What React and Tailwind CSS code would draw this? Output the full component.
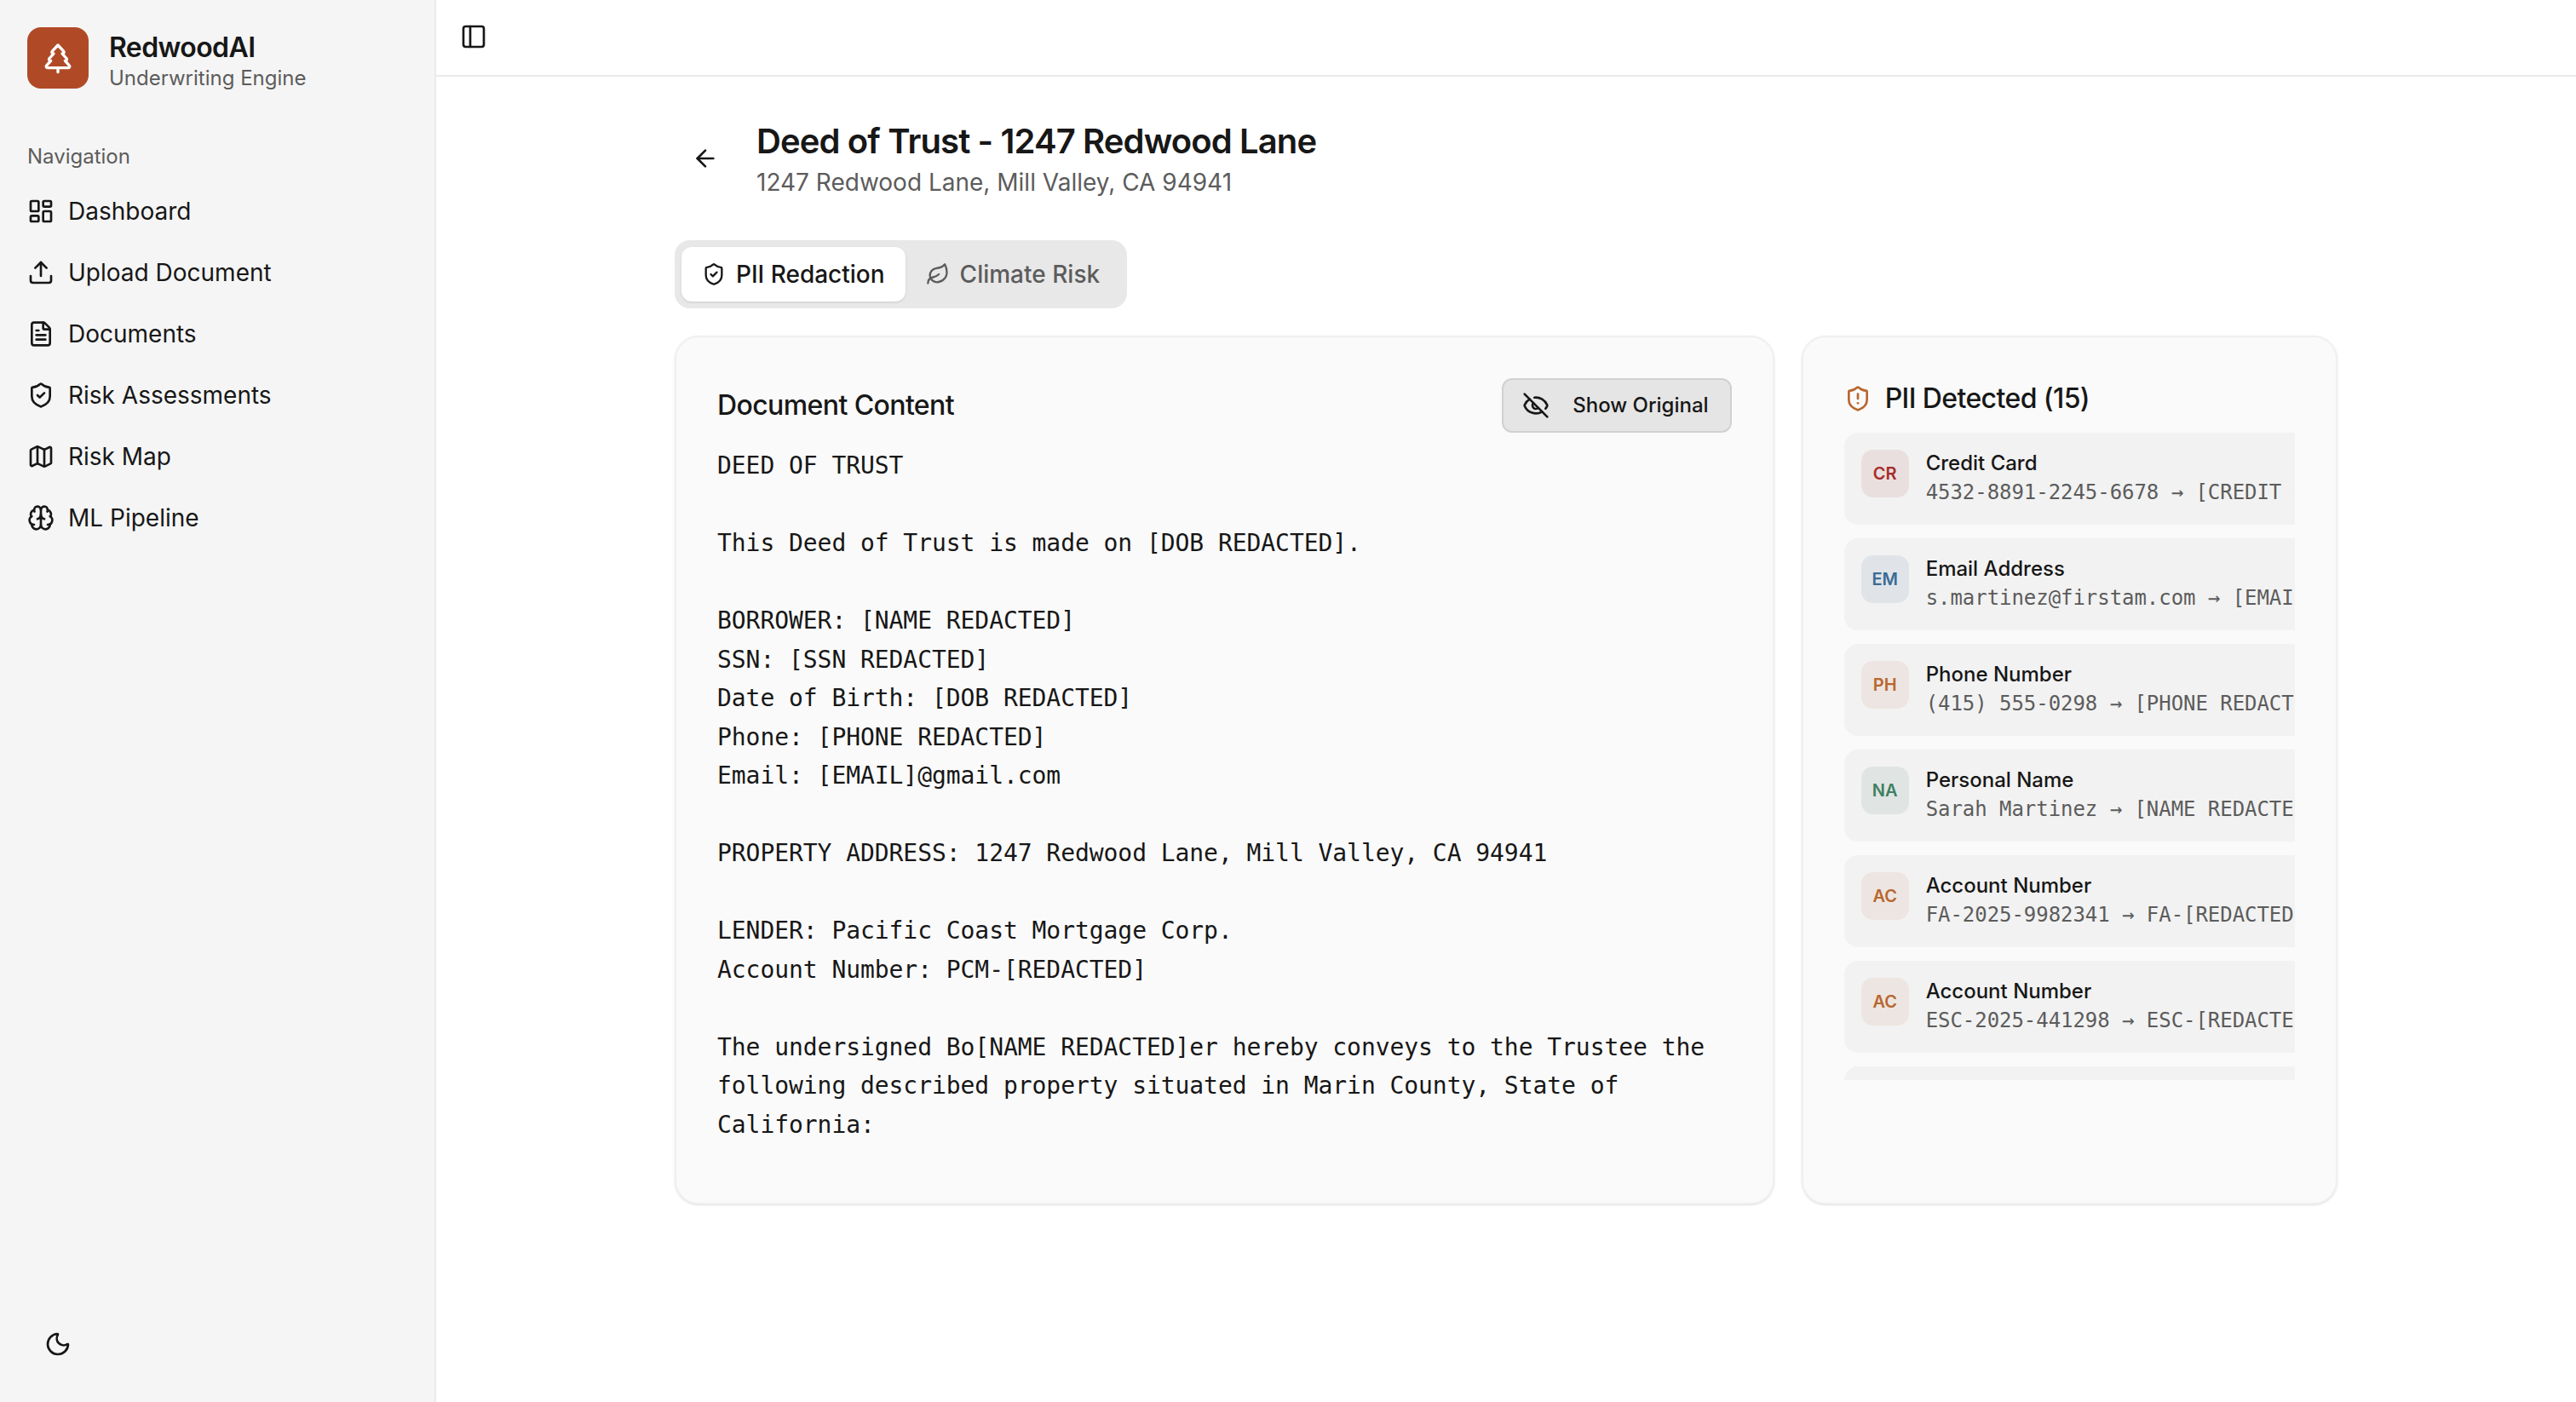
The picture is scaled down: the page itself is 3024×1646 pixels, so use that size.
import {
  ArrowLeft,
  Brain,
  EyeOff,
  FileText,
  LayoutDashboard,
  Leaf,
  Map as MapIcon,
  Moon,
  PanelLeft,
  ShieldAlert,
  ShieldCheck,
  TreePine,
  Upload,
} from 'lucide-react'

const navItems = [
  { label: 'Dashboard', icon: LayoutDashboard },
  { label: 'Upload Document', icon: Upload },
  { label: 'Documents', icon: FileText },
  { label: 'Risk Assessments', icon: ShieldCheck },
  { label: 'Risk Map', icon: MapIcon },
  { label: 'ML Pipeline', icon: Brain },
]

const documentText = `DEED OF TRUST

This Deed of Trust is made on [DOB REDACTED].

BORROWER: [NAME REDACTED]
SSN: [SSN REDACTED]
Date of Birth: [DOB REDACTED]
Phone: [PHONE REDACTED]
Email: [EMAIL]@gmail.com

PROPERTY ADDRESS: 1247 Redwood Lane, Mill Valley, CA 94941

LENDER: Pacific Coast Mortgage Corp.
Account Number: PCM-[REDACTED]

The undersigned Bo[NAME REDACTED]er hereby conveys to the Trustee the following described property situated in Marin County, State of California:`

const piiItems = [
  {
    code: 'CR',
    label: 'Credit Card',
    value: '4532-8891-2245-6678 → [CREDIT CARD REDACTED]',
    badge: 'bg-[#eadfdf] text-[#a52d2a]',
  },
  {
    code: 'EM',
    label: 'Email Address',
    value: 's.martinez@firstam.com → [EMAIL REDACTED]',
    badge: 'bg-[#e0e4e8] text-[#3b6c94]',
  },
  {
    code: 'PH',
    label: 'Phone Number',
    value: '(415) 555-0298 → [PHONE REDACTED]',
    badge: 'bg-[#ede5e1] text-[#b8672f]',
  },
  {
    code: 'NA',
    label: 'Personal Name',
    value: 'Sarah Martinez → [NAME REDACTED]',
    badge: 'bg-[#e0e5e3] text-[#3f8062]',
  },
  {
    code: 'AC',
    label: 'Account Number',
    value: 'FA-2025-9982341 → FA-[REDACTED]',
    badge: 'bg-[#ede5e1] text-[#b8672f]',
  },
  {
    code: 'AC',
    label: 'Account Number',
    value: 'ESC-2025-441298 → ESC-[REDACTED]',
    badge: 'bg-[#ede5e1] text-[#b8672f]',
  },
  {
    code: 'AC',
    label: 'Account Number',
    value: 'PCM-2025-118834 → PCM-[REDACTED]',
    badge: 'bg-[#ede5e1] text-[#b8672f]',
  },
]

const Sidebar = () => {
  return (
    <aside className="flex w-[512px] shrink-0 flex-col border-r-2 border-[#ebebeb] bg-[#f5f5f5]">
      <div className="flex h-[136px] items-start gap-6 p-8">
        <div className="flex size-[72px] items-center justify-center rounded-[16px] bg-[#b04a26]">
          <TreePine className="size-10 text-white" />
        </div>
        <div className="pt-1">
          <div className="text-[32px] leading-[40px] font-semibold tracking-[-0.6px] text-[#171717]">RedwoodAI</div>
          <div className="text-[24px] leading-[32px] text-[#5c5c5c]">Underwriting Engine</div>
        </div>
      </div>
      <div className="flex-1 px-4 pt-4">
        <div className="flex h-16 items-center px-4 text-[24px] text-[#5c5c5c]">Navigation</div>
        <nav className="flex flex-col gap-2">
          {navItems.map((item) => (
            <div key={item.label} className="flex h-16 items-center gap-4 px-4 text-[28px] text-[#171717]">
              <item.icon className="size-8" />
              <span>{item.label}</span>
            </div>
          ))}
        </nav>
      </div>
      <div className="px-9 pb-9">
        <div className="flex size-16 items-center justify-center text-[#171717]">
          <Moon className="size-8" />
        </div>
      </div>
    </aside>
  )
}

const DocumentCard = () => {
  return (
    <section className="col-span-2 rounded-[28px] border-2 border-[#f0f0f0] bg-[#fafafa] p-12 shadow-sm">
      <div className="mb-4 flex h-16 items-center justify-between">
        <h2 className="text-[32px] font-medium tracking-[-0.6px] text-[#171717]">Document Content</h2>
        <button className="flex h-16 items-center gap-[27px] rounded-[12px] border-2 border-[#d1d1d1] bg-[#e5e5e5] pr-[25px] pl-[22px] text-[24px] font-medium text-[#171717]">
          <EyeOff className="size-8" />
          Show Original
        </button>
      </div>
      <div className="h-[840px] font-['DejaVu_Sans_Mono',monospace] text-[28px] leading-[45.5px] tracking-[-0.06px] whitespace-pre-wrap text-[#171717]">
        {documentText}
      </div>
    </section>
  )
}

const PiiCard = () => {
  return (
    <section className="rounded-[28px] border-2 border-[#f0f0f0] bg-[#fafafa] p-12 shadow-sm">
      <div className="mb-4 flex h-12 items-center gap-4">
        <ShieldAlert className="size-8 text-[#b8672f]" />
        <h2 className="text-[32px] font-medium tracking-[-0.6px] text-[#171717]">PII Detected (15)</h2>
      </div>
      <div className="h-[760px] overflow-hidden">
        <div className="flex w-max flex-col gap-4">
          {piiItems.map((item, i) => (
            <div key={i} className="flex h-[108px] w-[700px] gap-5 rounded-[16px] bg-[#f2f2f2] p-5">
              <div
                className={`flex size-14 shrink-0 items-center justify-center rounded-[14px] text-[20px] font-semibold ${item.badge}`}
              >
                {item.code}
              </div>
              <div>
                <div className="text-[24px] leading-[32px] font-medium text-[#171717]">{item.label}</div>
                <div className="font-['DejaVu_Sans_Mono',monospace] text-[24px] leading-[36px] tracking-[-0.05px] whitespace-nowrap text-[#5c5c5c]">
                  {item.value}
                </div>
              </div>
            </div>
          ))}
        </div>
      </div>
    </section>
  )
}

const App = () => {
  return (
    <div className="flex min-h-screen bg-white font-['Inter',sans-serif]">
      <Sidebar />
      <main className="min-w-0 flex-1">
        <header className="flex h-[90px] items-center border-b-2 border-[#ebebeb] pb-0.5 pl-3">
          <div className="flex size-16 items-center justify-center text-[#171717]">
            <PanelLeft className="size-8" />
          </div>
        </header>
        <div className="mx-auto w-[1952px] pt-12">
          <div className="flex items-center gap-6">
            <div className="flex size-[72px] items-center justify-center text-[#171717]">
              <ArrowLeft className="size-8" />
            </div>
            <div>
              <h1 className="text-[40px] leading-[56px] font-semibold tracking-[-0.022em] text-[#171717]">
                Deed of Trust - 1247 Redwood Lane
              </h1>
              <p className="text-[28px] leading-[40px] text-[#5c5c5c]">1247 Redwood Lane, Mill Valley, CA 94941</p>
            </div>
          </div>
          <div className="mt-12 inline-flex h-20 items-center rounded-[18px] bg-[#e8e8e8] p-2">
            <div className="flex h-16 items-center gap-3 rounded-[12px] bg-white px-6 text-[28px] font-medium text-[#171717] shadow-sm">
              <ShieldCheck className="size-7" />
              PII Redaction
            </div>
            <div className="flex h-16 items-center gap-3 px-6 text-[28px] font-medium text-[#5c5c5c]">
              <Leaf className="size-7" />
              Climate Risk
            </div>
          </div>
          <div className="mt-8 grid grid-cols-3 gap-8">
            <DocumentCard />
            <PiiCard />
          </div>
        </div>
      </main>
    </div>
  )
}

export default App
